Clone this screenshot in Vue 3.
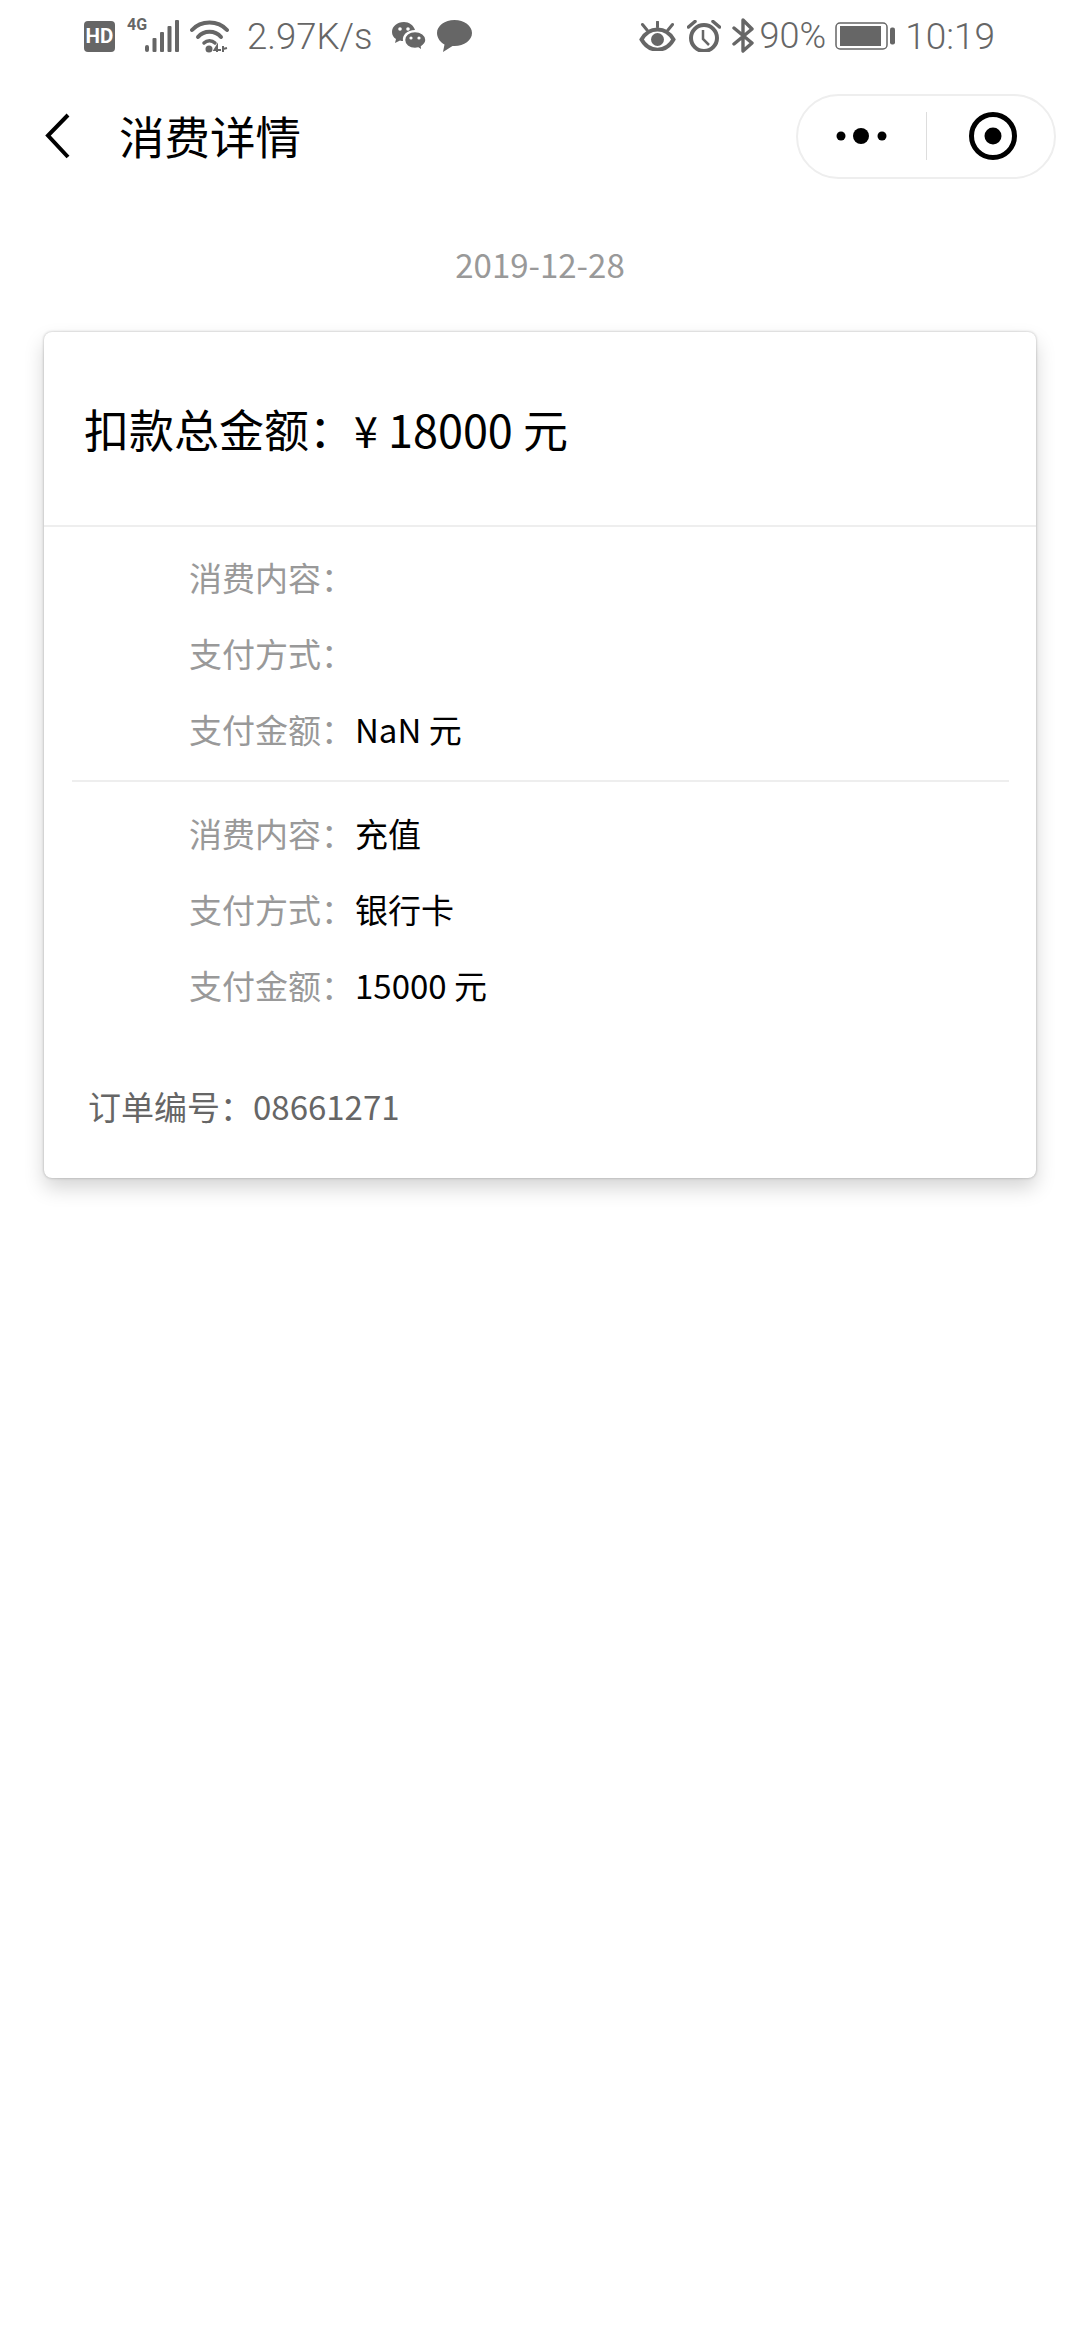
<template>
  <div class="page">
    <div class="status-bar">
      <svg class="ic" width="31" height="31" viewBox="0 0 31 31" style="margin-left:84px">
        <rect width="31" height="31" rx="4" fill="#666" />
      </svg>
      <span class="hd">HD</span>
      <span class="net">4G</span>
      <svg class="ic signal" width="35" height="32" viewBox="0 0 35 32">
        <rect x="0" y="25" width="4" height="7" rx="2" fill="#666" />
        <rect x="7.500" y="18" width="4" height="14" rx="1" fill="#666" />
        <rect x="15" y="12" width="4" height="20" rx="1" fill="#666" />
        <rect x="22.500" y="6" width="4" height="26" rx="1" fill="#666" />
        <rect x="30" y="0" width="4" height="32" rx="1" fill="#666" />
      </svg>
      <svg class="ic wifi" width="40" height="33" viewBox="0 0 40 33">
        <path d="M2 10 C11 0 28 0 37 10" fill="none" stroke="#666" stroke-width="4" stroke-linecap="round" />
        <path d="M8 17 C14 10 25 10 31 17" fill="none" stroke="#666" stroke-width="4" stroke-linecap="round" />
        <path d="M14 23 C17 20 22 20 25 23" fill="none" stroke="#666" stroke-width="3.500" stroke-linecap="round" />
        <circle cx="19" cy="29" r="3.500" fill="#666" />
        <path d="M27 32 V26 L24.500 30 H31 M33 26 V32 M33 29 L37 28" fill="none" stroke="#666" stroke-width="2" />
      </svg>
      <span class="speed">2.97K/s</span>
      <svg class="ic wechat" width="34" height="29" viewBox="0 0 34 29">
        <path d="M12 0 C5 0 0 4.500 0 10 C0 13 1.500 15.500 4 17 L3 21 L8 18.500 C9 19 10 19 11 19 C10 13 15 8 23 8 C21.500 3 17 0 12 0 Z" fill="#666" />
        <path d="M23 9.500 C17 9.500 12.500 13.300 12.500 18 C12.500 22.700 17 26.500 23 26.500 C24.200 26.500 25.300 26.300 26.300 26 L30 28.500 L29.500 24.500 C32 22.800 34 20.500 34 18 C34 13.300 29 9.500 23 9.500 Z" fill="#666" stroke="#fff" stroke-width="1.500" />
        <circle cx="8" cy="7" r="1.800" fill="#fff" />
        <circle cx="16" cy="7" r="1.800" fill="#fff" />
        <circle cx="19" cy="16" r="1.600" fill="#fff" />
        <circle cx="27" cy="16" r="1.600" fill="#fff" />
      </svg>
      <svg class="ic bubble" width="35" height="32" viewBox="0 0 35 32">
        <path d="M17.500 0 C7.800 0 0 5.800 0 13 C0 18.500 4 22.700 7.500 24.500 L6 32 L15.500 26 C16.200 26 16.800 26 17.500 26 C27.200 26 35 20.200 35 13 C35 5.800 27.200 0 17.500 0 Z" fill="#666" />
      </svg>
      <svg class="ic eye" width="37" height="30" viewBox="0 0 37 30" style="margin-left:auto">
        <path d="M2.500 18.500 C10 5 27 5 34.500 18.500 C27 32 10 32 2.500 18.500 Z" fill="none" stroke="#666" stroke-width="4" />
        <circle cx="18.500" cy="18.500" r="6.500" fill="#666" />
        <path d="M18.500 1 V6 M3.500 3.500 L8 9 M33.500 3.500 L29 9" stroke="#666" stroke-width="3" stroke-linecap="round" />
      </svg>
      <svg class="ic alarm" width="34" height="32" viewBox="0 0 34 32">
        <circle cx="17" cy="18" r="13" fill="none" stroke="#666" stroke-width="4" />
        <path d="M16 10 V19 L22 25" fill="none" stroke="#666" stroke-width="2.500" />
        <path d="M1.500 7 L8 1.500 M32.500 7 L26 1.500" stroke="#666" stroke-width="3.500" stroke-linecap="round" />
      </svg>
      <svg class="ic bt" width="22" height="36" viewBox="0 0 22 36">
        <path d="M2 10 L20 25 L11 33 V2 L20 11 L2 26" fill="none" stroke="#666" stroke-width="3.400" stroke-linejoin="round" stroke-linecap="round" />
      </svg>
      <span class="pct">90%</span>
      <svg class="ic battery" width="60" height="28" viewBox="0 0 60 28">
        <rect x="1" y="1" width="51" height="26" rx="4" fill="none" stroke="#666" stroke-width="1.500" />
        <rect x="5" y="4" width="41" height="20" fill="#666" />
        <rect x="55" y="5.500" width="5" height="17" rx="2" fill="#666" />
      </svg>
      <span class="time">10:19</span>
    </div>

    <div class="nav-bar">
      <svg class="back" width="26" height="46" viewBox="0 0 26 46">
        <path d="M23 2 L3 22.500 L23 44" fill="none" stroke="#000" stroke-width="4" />
      </svg>
      <div class="title">消费详情</div>
      <div class="capsule">
        <div class="capsule-btn">
          <svg width="52" height="20" viewBox="0 0 52 20">
            <circle cx="5" cy="10" r="4.500" fill="#000" />
            <circle cx="25" cy="10" r="8" fill="#000" />
            <circle cx="46" cy="10" r="4.500" fill="#000" />
          </svg>
        </div>
        <div class="capsule-line"></div>
        <div class="capsule-btn">
          <svg class="ring" width="50" height="50" viewBox="0 0 50 50">
            <circle cx="25" cy="25" r="21.500" fill="none" stroke="#000" stroke-width="5" />
            <circle cx="25" cy="25" r="8.500" fill="#000" />
          </svg>
        </div>
      </div>
    </div>

    <div class="date">2019-12-28</div>

    <div class="card">
      <div class="total">扣款总金额：<span class="yen">¥</span> 18000 元</div>
      <div class="groups">
        <div v-for="(group, i) in groups" :key="i" class="group">
          <div v-for="row in group" :key="row.label" class="row">
            <span class="label">{{ row.label }}：</span>
            <span class="value">{{ row.value }}</span>
          </div>
        </div>
      </div>
      <div class="order">订单编号：08661271</div>
    </div>
  </div>
</template>

<script setup>
const groups = [
  [
    { label: '消费内容', value: '' },
    { label: '支付方式', value: '' },
    { label: '支付金额', value: 'NaN 元' }
  ],
  [
    { label: '消费内容', value: '充值' },
    { label: '支付方式', value: '银行卡' },
    { label: '支付金额', value: '15000 元' }
  ]
]
</script>

<style>
html,
body {
  margin: 0;
  background: #fff;
}
</style>

<style scoped>
.page {
  width: 1080px;
  height: 2340px;
  background: #fff;
  overflow: hidden;
  font-family: "Noto Sans CJK SC", "Noto Sans", sans-serif;
}

.status-bar {
  height: 72px;
  display: flex;
  align-items: center;
  position: relative;
  color: #666;
  font-family: Roboto, sans-serif;
  font-weight: 300;
}

.ic {
  flex: none;
}

.hd {
  position: absolute;
  left: 84px;
  top: 21px;
  width: 31px;
  line-height: 31px;
  text-align: center;
  font-size: 20.500px;
  font-weight: 700;
  color: #fff;
}

.net {
  margin-left: 12px;
  width: 20px;
  font-size: 16px;
  font-weight: 700;
  line-height: 14px;
  align-self: flex-start;
  margin-top: 18px;
}

.signal {
  margin-left: -2px;
}

.wifi {
  margin-left: 10px;
}

.speed {
  margin-left: 17px;
  font-size: 36.500px;
}

.wechat {
  margin-left: 19px;
}

.bubble {
  margin-left: 11px;
}

.alarm {
  margin-left: 11px;
}

.bt {
  margin-left: 11px;
}

.pct {
  margin-left: 6px;
  font-size: 36px;
}

.battery {
  margin-left: 9px;
}

.time {
  margin-left: 10px;
  margin-right: 85px;
  font-size: 37px;
}

.nav-bar {
  height: 128px;
  display: flex;
  align-items: center;
}

.back {
  margin-left: 45px;
}

.title {
  margin-left: 48px;
  padding-bottom: 3px;
  font-size: 45.500px;
  color: #000;
}

.capsule {
  margin-left: auto;
  margin-right: 24px;
  width: 260px;
  height: 85px;
  box-sizing: border-box;
  border: 2px solid #eee;
  border-radius: 43px;
  display: flex;
  align-items: center;
}

.capsule-btn {
  flex: 1;
  display: flex;
  justify-content: center;
  align-items: center;
}

.capsule-line {
  width: 1px;
  height: 48px;
  background: #ddd;
}

.ring {
  margin-left: 6px;
}

.date {
  margin-top: 36px;
  text-align: center;
  font-size: 33px;
  line-height: 56px;
  color: #999;
}

.card {
  margin: 40px 44px 0;
  height: 846px;
  box-sizing: border-box;
  border-radius: 8px;
  background: #fff;
  box-shadow: 0 0 3px rgba(0, 0, 0, 0.28), 0 10px 20px rgba(0, 0, 0, 0.17);
}

.total {
  height: 195px;
  box-sizing: border-box;
  padding-left: 40px;
  display: flex;
  align-items: center;
  border-bottom: 2px solid #eee;
  font-size: 45px;
  color: #000;
  white-space: pre;
}

.yen {
  font-size: 43px;
}

.groups {
  padding: 12px 27px 0 28px;
}

.group {
  padding-bottom: 13px;
}

.group + .group {
  border-top: 2px solid #eee;
  padding-top: 13px;
}

.row {
  height: 76px;
  display: flex;
  align-items: center;
  padding-left: 117px;
  font-size: 33px;
}

.label {
  width: 166px;
  flex: none;
  color: #999;
}

.value {
  color: #000;
}

.order {
  margin-top: 32px;
  padding-left: 44px;
  font-size: 33px;
  line-height: 76px;
  color: #666;
}
</style>
